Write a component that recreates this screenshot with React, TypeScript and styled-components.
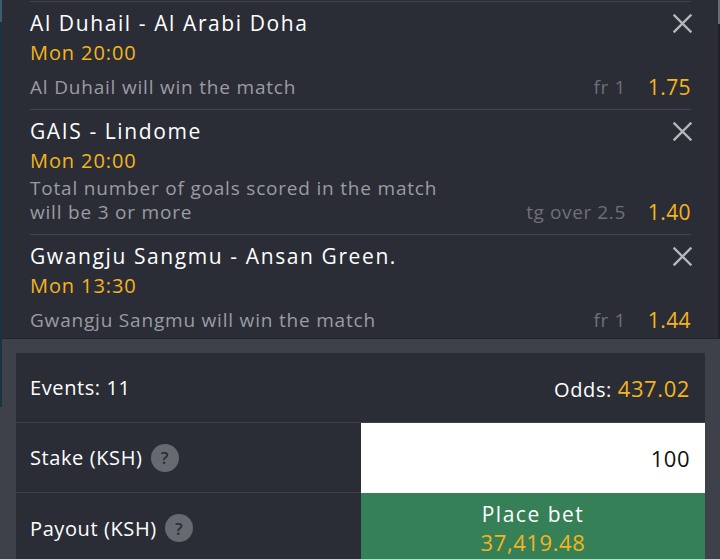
import styled, { createGlobalStyle } from 'styled-components'

const GlobalStyle = createGlobalStyle`
  html, body {
    margin: 0;
    padding: 0;
    background: #2a2d36;
  }
  body {
    font-family: 'Open Sans', 'Liberation Sans', sans-serif;
  }
`

type Selection = {
  match: string
  time: string
  pick: string
  market: string
  odds: string
}

const selections: Selection[] = [
  {
    match: 'Al Duhail - Al Arabi Doha',
    time: 'Mon 20:00',
    pick: 'Al Duhail will win the match',
    market: 'fr 1',
    odds: '1.75',
  },
  {
    match: 'GAIS - Lindome',
    time: 'Mon 20:00',
    pick: 'Total number of goals scored in the match will be 3 or more',
    market: 'tg over 2.5',
    odds: '1.40',
  },
  {
    match: 'Gwangju Sangmu - Ansan Green.',
    time: 'Mon 13:30',
    pick: 'Gwangju Sangmu will win the match',
    market: 'fr 1',
    odds: '1.44',
  },
]

export default function App() {
  return (
    <>
      <GlobalStyle />
      <Page>
        <LeftEdge />
        <Main>
          <ListArea>
            <List>
              {selections.map((s) => (
                <Row key={s.match}>
                  <TitleLine>
                    <Title>{s.match}</Title>
                    <RemoveButton aria-label="Remove">
                      <svg width="19" height="19" viewBox="0 0 19 19">
                        <path
                          d="M1.5 1.5 L17.5 17.5 M17.5 1.5 L1.5 17.5"
                          stroke="#b6b7ba"
                          strokeWidth="2.4"
                          strokeLinecap="square"
                        />
                      </svg>
                    </RemoveButton>
                  </TitleLine>
                  <Time>{s.time}</Time>
                  <PickRow>
                    <Pick>{s.pick}</Pick>
                    <Market>{s.market}</Market>
                    <Odds>{s.odds}</Odds>
                  </PickRow>
                </Row>
              ))}
            </List>
            <ScrollTrack>
              <ScrollThumb />
            </ScrollTrack>
          </ListArea>

          <SlipPanel>
            <SlipCard>
              <SummaryRow>
                <Label>Events: 11</Label>
                <Label>
                  Odds: <Accent>437.02</Accent>
                </Label>
              </SummaryRow>
              <FieldRow>
                <LabelCell $divider>
                  <Label>Stake (KSH)</Label>
                  <Help>?</Help>
                </LabelCell>
                <StakeInput defaultValue="100" />
              </FieldRow>
              <FieldRow>
                <LabelCell>
                  <Label>Payout (KSH)</Label>
                  <Help>?</Help>
                </LabelCell>
                <PlaceBet>
                  <BetLabel>Place bet</BetLabel>
                  <Accent>37,419.48</Accent>
                </PlaceBet>
              </FieldRow>
            </SlipCard>
          </SlipPanel>
        </Main>
      </Page>
    </>
  )
}

const Page = styled.div`
  display: flex;
  width: 720px;
  height: 559px;
  overflow: hidden;
  background: #2a2d36;
`

const LeftEdge = styled.div`
  width: 2px;
  flex: none;
  background: linear-gradient(
    #3d5d6e 0 22px,
    #1b3243 22px 407px,
    #3e4149 407px
  );
`

const Main = styled.div`
  flex: 1;
  display: flex;
  flex-direction: column;
  min-width: 0;
`

const ListArea = styled.div`
  height: 338px;
  flex: none;
  display: flex;
  overflow: hidden;
`

const List = styled.div`
  flex: 1;
  padding: 1px 27px 0 28px;
`

const ScrollTrack = styled.div`
  width: 2px;
  flex: none;
  background: #1f2127;
`

const ScrollThumb = styled.div`
  height: 24px;
  background: #6a6d73;
`

const Row = styled.div`
  border-top: 1px solid #40434b;
  padding: 7px 0 10px 0;
`

const TitleLine = styled.div`
  display: flex;
  align-items: center;
  justify-content: space-between;
`

const Title = styled.div`
  color: #ffffff;
  font-size: 21px;
  line-height: 28px;
  letter-spacing: 1.6px;
`

const RemoveButton = styled.button`
  display: flex;
  padding: 0;
  margin: 0 -1px 0 0;
  border: 0;
  background: none;
  cursor: pointer;
`

const Time = styled.div`
  color: #f5b41c;
  font-size: 20px;
  line-height: 30px;
  padding-top: 1px;
  letter-spacing: 0.9px;
`

const PickRow = styled.div`
  display: flex;
  align-items: flex-end;
  min-height: 31px;
`

const Pick = styled.div`
  flex: 1;
  max-width: 420px;
  color: #9a9ca2;
  font-size: 19px;
  line-height: 24px;
  letter-spacing: 0.8px;
`

const Market = styled.div`
  margin-left: auto;
  color: #6d7077;
  font-size: 19px;
  line-height: 24px;
  letter-spacing: 0.6px;
`

const Odds = styled.div`
  margin-left: 22px;
  color: #f5b41c;
  font-size: 21px;
  line-height: 24px;
  letter-spacing: 0.4px;
`

const SlipPanel = styled.div`
  flex: 1;
  background: #3e4149;
  padding: 15px 15px 0 14px;
  box-shadow: inset 0 1px 0 #23252c;
`

const SlipCard = styled.div`
  background: #2a2d36;
  height: 100%;
`

const SummaryRow = styled.div`
  display: flex;
  align-items: center;
  justify-content: space-between;
  height: 69px;
  padding: 0 15px 0 14px;
  border-bottom: 1px solid #3e4149;
`

const Label = styled.span`
  color: #ffffff;
  font-size: 20px;
  letter-spacing: 0.6px;
`

const Accent = styled.span`
  color: #f5b41c;
  font-size: 22px;
  letter-spacing: 0.6px;
`

const FieldRow = styled.div`
  display: grid;
  grid-template-columns: 345px 1fr;
  height: 70px;
`

const LabelCell = styled.div<{ $divider?: boolean }>`
  display: flex;
  align-items: center;
  gap: 8px;
  padding-left: 14px;
  border-bottom: ${(p) => (p.$divider ? '1px solid #3e4149' : '0')};
`

const Help = styled.span`
  display: inline-flex;
  align-items: center;
  justify-content: center;
  width: 28px;
  height: 28px;
  border-radius: 50%;
  background: #66696f;
  color: #2a2d36;
  font-size: 17px;
  font-weight: 600;
`

const StakeInput = styled.input`
  box-sizing: border-box;
  width: 100%;
  height: 100%;
  border: 0;
  outline: none;
  margin: 0;
  padding: 0 15px 0 10px;
  background: #ffffff;
  color: #111111;
  text-align: right;
  font-family: 'Open Sans', 'Liberation Sans', sans-serif;
  font-size: 22px;
  letter-spacing: 0.5px;
`

const PlaceBet = styled.button`
  display: flex;
  flex-direction: column;
  align-items: center;
  justify-content: center;
  border: 0;
  margin: 0;
  padding: 0;
  background: #358057;
  color: #ffffff;
  font-family: 'Open Sans', 'Liberation Sans', sans-serif;
  line-height: 28px;
  cursor: pointer;
`

const BetLabel = styled.span`
  font-size: 21px;
  letter-spacing: 1.5px;
`
